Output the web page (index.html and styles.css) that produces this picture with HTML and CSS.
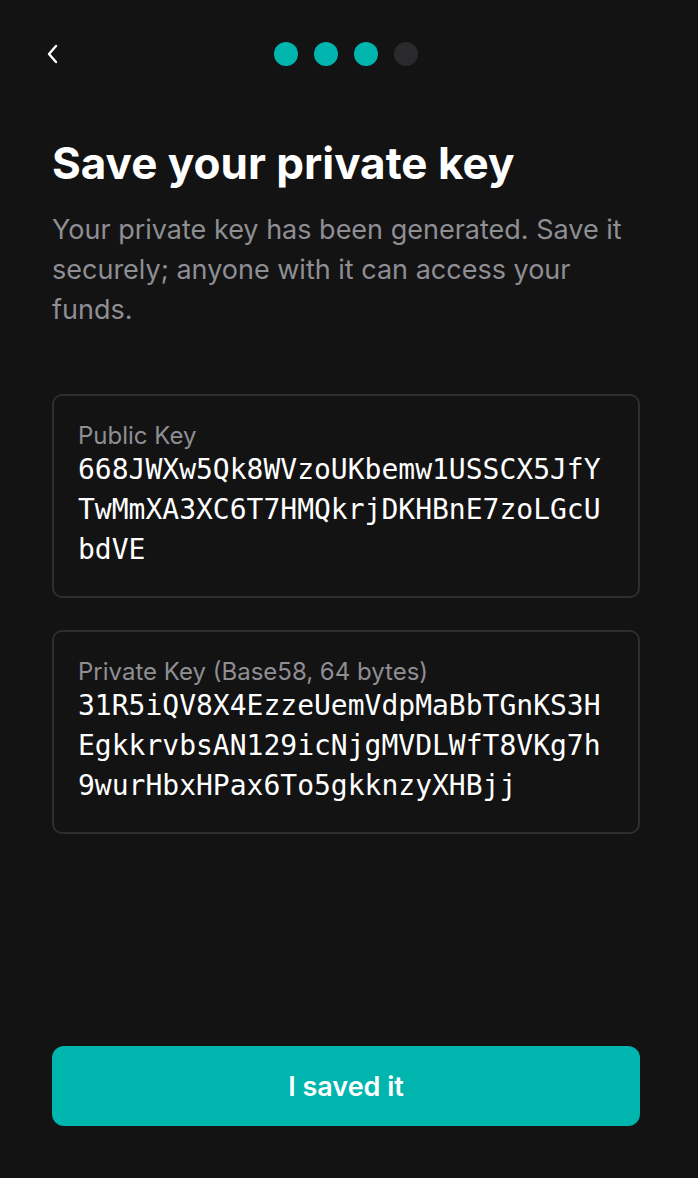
FILE: index.html
```html
<!DOCTYPE html>
<html>
<head>
<meta charset="utf-8">
<title>Save your private key</title>
<link rel="stylesheet" href="styles.css">
</head>
<body>
<div class="screen">
	<div class="topbar">
		<a class="back" href="#">
			<svg width="14" height="22" viewBox="0 0 14 22"><path d="M10 3 L3 11 L10 19" fill="none" stroke="#fff" stroke-width="2.4" stroke-linecap="round" stroke-linejoin="round"/></svg>
		</a>
		<div class="steps">
			<span class="dot on"></span>
			<span class="dot on"></span>
			<span class="dot on"></span>
			<span class="dot"></span>
		</div>
	</div>

	<h1 class="title">Save your private key</h1>
	<p class="lead">Your private key has been generated. Save it securely; anyone with it can access your funds.</p>

	<div class="keybox">
		<div class="label">Public Key</div>
		<div class="key">668JWXw5Qk8WVzoUKbemw1USSCX5JfYTwMmXA3XC6T7HMQkrjDKHBnE7zoLGcUbdVE</div>
	</div>

	<div class="keybox">
		<div class="label">Private Key (Base58, 64 bytes)</div>
		<div class="key">31R5iQV8X4EzzeUemVdpMaBbTGnKS3HEgkkrvbsAN129icNjgMVDLWfT8VKg7h9wurHbxHPax6To5gkknzyXHBjj</div>
	</div>

	<div class="spacer"></div>

	<a class="button" href="#">I saved it</a>
</div>
</body>
</html>
```

FILE: styles.css
```css
html, body {
	margin: 0px;
	background-color: #131313;
}
body {
	font-family: Inter, "Noto Sans", sans-serif;
	color: #fff;
}
.screen {
	display: flex;
	flex-direction: column;
	min-height: 100vh;
	box-sizing: border-box;
	padding: 30px 58px 52px 52px;
}
.topbar {
	position: relative;
	display: flex;
	align-items: center;
	justify-content: center;
	height: 48px;
}
.back {
	position: absolute;
	left: -6px;
	top: 13px;
	display: block;
	line-height: 0;
}
.steps {
	display: flex;
	gap: 16px;
}
.dot {
	width: 24px;
	height: 24px;
	border-radius: 50%;
	background-color: #2a2a2d;
}
.dot.on {
	background-color: #00b5ad;
}
.title {
	margin: 59px 0px 0px 0px;
	font-size: 44px;
	font-weight: 700;
	line-height: 52px;
}
.lead {
	margin: 21px 0px 64px 0px;
	font-size: 27px;
	line-height: 40px;
	color: #8e8e93;
}
.keybox {
	border: 2px solid #2e2e30;
	border-radius: 10px;
	padding: 26px 24px 26px 24px;
	margin-bottom: 32px;
}
.label {
	font-size: 24px;
	line-height: 28px;
	color: #8e8e93;
}
.key {
	font-family: "DejaVu Sans Mono", monospace;
	font-size: 28px;
	line-height: 40px;
	word-break: break-all;
}
.spacer {
	flex: 1;
}
.button {
	display: flex;
	align-items: center;
	justify-content: center;
	height: 80px;
	border-radius: 12px;
	background-color: #00b5ad;
	color: #fff;
	text-decoration: none;
	font-size: 27px;
	font-weight: 600;
}
```
